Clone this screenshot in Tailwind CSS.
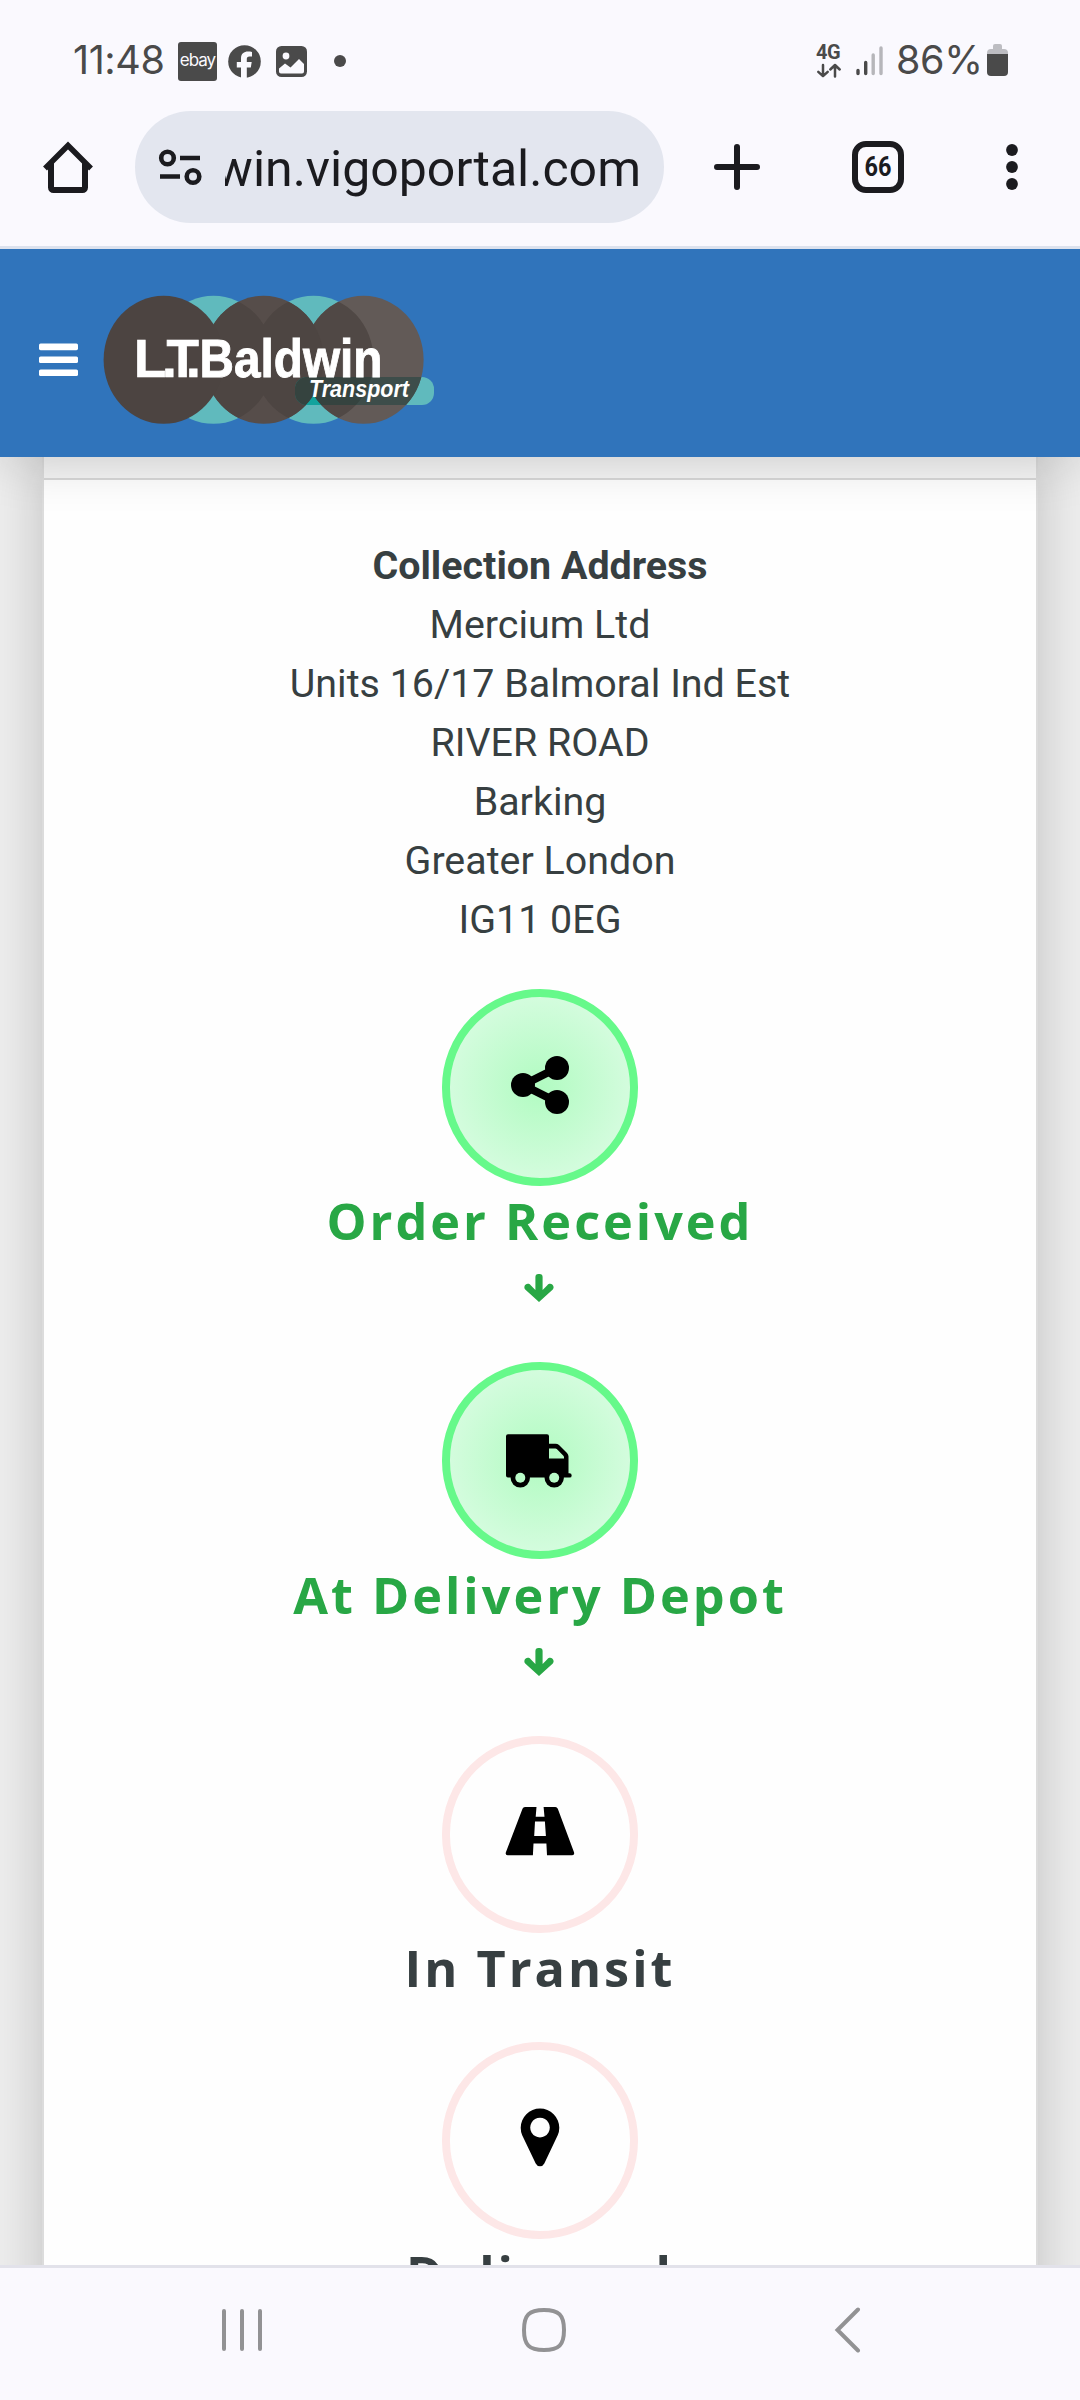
<!DOCTYPE html>
<html lang="en">
<head>
<meta charset="utf-8">
<title>Track Delivery</title>
<script src="https://cdn.jsdelivr.net/npm/@tailwindcss/browser@4"></script>
</head>
<body class="w-[1080px] h-[2400px] overflow-hidden flex flex-col bg-[#faf9fe] font-['Roboto',sans-serif]">

<!-- status bar -->
<div class="h-[100px] shrink-0 flex items-start pl-[73px] pr-[72px] pt-[42px] text-[#4a4a4a]">
  <span class="w-[105px] h-[39px] text-[39.5px] leading-[37px] font-normal font-['Inter',sans-serif] whitespace-nowrap tracking-[-0.4px]">11:48</span>
  <span class="w-[39px] h-[39px] rounded-[3px] bg-[#4a4a4a] text-[#faf9fe] text-[17px] leading-[36px] text-center tracking-[-1px] font-['Inter',sans-serif]">ebay</span>
  <svg class="ml-[11px] mt-[3px]" width="33" height="33" viewBox="0 0 33 33"><circle cx="16.500" cy="16.500" r="16.300" fill="#4a4a4a"/><path d="M13 33V22.500H8.800V17H13v-3.500C13 8.500 16 6.500 20 6.500c1.500 0 2.800.1 4 .4v4.600h-2.500c-2 0-2.700 1-2.700 2.600V17h4.900l-.9 5.500h-4V33z" fill="#faf9fe"/></svg>
  <svg class="ml-[15px] mt-[4px]" width="31" height="31" viewBox="0 0 31 31"><rect width="31" height="31" rx="5.500" fill="#4a4a4a"/><circle cx="10" cy="10" r="3.400" fill="#faf9fe"/><path d="M3 22.500l6-5 5.500 4L23 13l5 5v7.500a2 2 0 0 1-2 2H5a2 2 0 0 1-2-2z" fill="#faf9fe"/></svg>
  <span class="ml-[27px] mt-[13px] w-3 h-3 rounded-full bg-[#4a4a4a]"></span>
  <div class="ml-auto flex items-start">
    <div class="w-[26px] mr-[14px] flex flex-col">
      <span class="h-[21px] text-[20px] leading-[21px] font-bold tracking-[-0.5px]">4G</span>
      <svg width="26" height="15" viewBox="0 0 26 15" fill="none" stroke="#4a4a4a" stroke-width="2.500" stroke-linecap="round" stroke-linejoin="round"><path d="M7 2v11M2.300 8.800L7 13.200l4.700-4.400M19 13.500V2.200M14.300 6.500L19 2l4.700 4.500"/></svg>
    </div>
    <svg class="mt-[4px]" width="27" height="30" viewBox="0 0 27 30" stroke-width="3.400" stroke-linecap="round"><path d="M2 24.500v3M9.700 16.500v11" stroke="#4a4a4a"/><path d="M17.200 9v18.500M25 2v25.500" stroke="#b6b6ba"/></svg>
    <span class="ml-[13px] w-[91px] text-[39.5px] leading-[37px] font-normal font-['Inter',sans-serif] tracking-[-0.4px] whitespace-nowrap">86%</span>
    <svg class="mt-[2px]" width="21" height="32" viewBox="0 0 21 32"><path d="M6 2a2 2 0 0 1 2-2h5a2 2 0 0 1 2 2v3h2a4 4 0 0 1 4 4v2H0V9a4 4 0 0 1 4-4h2z" fill="#bdbdc2"/><path d="M0 10h21v18a4 4 0 0 1-4 4H4a4 4 0 0 1-4-4z" fill="#4a4a4a"/></svg>
  </div>
</div>

<!-- browser toolbar -->
<div class="h-[149px] shrink-0 flex items-start pt-[11px] border-b-[3px] border-[#dce2ee]">
  <svg class="ml-[41px] mt-[29px]" width="54" height="54" viewBox="0 0 54 54" fill="none" stroke="#1b1b1f" stroke-width="6" stroke-linejoin="round"><path d="M4 28.500L27 5.500l23 23" stroke-width="5.500" stroke-linejoin="miter"/><path d="M10 23v24.500a2.500 2.500 0 0 0 2.500 2.500h29a2.500 2.500 0 0 0 2.500-2.500V23"/></svg>
  <div class="ml-[40px] w-[529px] h-[112px] rounded-full bg-[#e3e6ef] flex items-center">
    <svg class="ml-[23px]" width="44" height="38" viewBox="0 0 44 38" fill="none" stroke="#1b1b1f" stroke-width="4.600"><circle cx="9.500" cy="10" r="6.300"/><path d="M22 10h20M2 28.500h20"/><circle cx="35" cy="28.500" r="6.300"/></svg>
    <div class="ml-[23px] w-[416px] h-[76px] overflow-hidden flex justify-end">
      <span class="text-[50px] leading-[80px] text-[#1b1b1f] whitespace-nowrap">baldwin.vigoportal.com</span>
    </div>
  </div>
  <svg class="ml-[50px] mt-[33px]" width="46" height="46" viewBox="0 0 46 46" stroke="#1b1b1f" stroke-width="6" stroke-linecap="round"><path d="M23 3v40M3 23h40"/></svg>
  <div class="ml-[92px] mt-[30px] w-[52px] h-[52px] rounded-[14px] border-[6px] border-[#1b1b1f] flex items-center justify-center">
    <span class="text-[28px] leading-[40px] font-bold text-[#1b1b1f] scale-x-[0.84]">66</span>
  </div>
  <svg class="ml-[102px] mt-[33px]" width="12" height="46" viewBox="0 0 12 46" fill="#1b1b1f"><circle cx="6" cy="6" r="5.900"/><circle cx="6" cy="23" r="5.900"/><circle cx="6" cy="40" r="5.900"/></svg>
</div>

<!-- page -->
<div class="h-[2016px] shrink-0 overflow-hidden bg-[#eeeeee] flex flex-col">
  <header class="relative z-10 h-[208px] shrink-0 bg-[#3074bb] flex items-start shadow-[0_0_52px_rgba(0,0,0,0.2)]">
    <svg class="ml-[39px] mt-[94px]" width="39" height="34" viewBox="0 0 39 34" fill="#fff"><rect y=".6" width="39" height="6.600" rx="1.600"/><rect y="13.500" width="39" height="6.600" rx="1.600"/><rect y="26.400" width="39" height="6.600" rx="1.600"/></svg>
    <svg class="ml-[22px] mt-[41px]" width="340" height="140" viewBox="100 290 340 140">
      <defs>
        <clipPath id="teals"><ellipse cx="213.500" cy="359.800" rx="60" ry="64"/><ellipse cx="313.500" cy="359.800" rx="60" ry="64"/></clipPath>
        <clipPath id="greys"><ellipse cx="263.500" cy="359.800" rx="60" ry="64"/><ellipse cx="363.600" cy="359.800" rx="60" ry="64"/></clipPath>
      </defs>
      <g fill="#60babd"><ellipse cx="213.500" cy="359.800" rx="60" ry="64"/><ellipse cx="313.500" cy="359.800" rx="60" ry="64"/><rect x="295" y="377" width="139" height="28" rx="12"/></g>
      <ellipse cx="363.600" cy="359.800" rx="60" ry="64" fill="#625a57"/>
      <ellipse cx="263.500" cy="359.800" rx="60" ry="64" fill="#564d4a"/>
      <g clip-path="url(#teals)"><ellipse cx="363.600" cy="359.800" rx="60" ry="64" fill="#504845"/><ellipse cx="263.500" cy="359.800" rx="60" ry="64" fill="#4d4542"/></g>
      <ellipse cx="163.600" cy="359.800" rx="60" ry="64" fill="#4c4441"/>
      <g clip-path="url(#teals)"><rect x="295" y="377" width="139" height="28" rx="12" fill="#12a39d"/></g>
      <g clip-path="url(#greys)"><rect x="295" y="377" width="139" height="28" rx="12" fill="#3d4d4a"/></g>
      <g clip-path="url(#greys)"><g clip-path="url(#teals)"><rect x="295" y="377" width="139" height="28" rx="12" fill="#35433f"/></g></g>
      <g font-family="Liberation Sans, sans-serif" font-weight="700" fill="#fff">
        <text x="134 162 166.500 186" y="377.300" font-size="53" stroke="#fff" stroke-width=".7">L.T.</text>
        <text x="199.500" y="377.300" font-size="53" textLength="183" lengthAdjust="spacingAndGlyphs" stroke="#fff" stroke-width=".9">Baldwin</text>
        <text x="309" y="397" font-style="italic" font-size="23.500" textLength="100" lengthAdjust="spacingAndGlyphs">Transport</text>
      </g>
    </svg>
  </header>

  <main class="mx-[42px] h-[1900px] shrink-0 border-x-2 border-[#dcdcdc] bg-[#fefefe] shadow-[0_0_52px_rgba(0,0,0,0.2)] flex flex-col items-center text-[#373f41]">
    <div class="w-full h-[23px] shrink-0 bg-[#f5f5f5] border-b-2 border-[#d8d8d8]"></div>
    <address class="mt-[56px] not-italic text-center text-[39.4px] leading-[59px]">
      <b class="block font-bold">Collection Address</b>
      <span class="block">Mercium Ltd</span>
      <span class="block">Units 16/17 Balmoral Ind Est</span>
      <span class="block">RIVER ROAD</span>
      <span class="block">Barking</span>
      <span class="block">Greater London</span>
      <span class="block">IG11 0EG</span>
    </address>

    <section class="mt-[40px] h-[373px] shrink-0 flex flex-col items-center text-[#28a745]">
      <div class="w-[196px] h-[197px] shrink-0 rounded-full border-8 border-[#66f98a] bg-[radial-gradient(circle,#b1fbc1_0%,#d3fcdd_70%)] flex items-center justify-center">
        <svg class="-mt-[5px]" width="60" height="60" viewBox="510 1055 60 60"><path d="M557 1068l-34 17 34 17" fill="none" stroke="#000" stroke-width="8"/><circle cx="523" cy="1085" r="12"/><circle cx="557" cy="1068" r="12"/><circle cx="557" cy="1102" r="12"/></svg>
      </div>
      <h3 class="h-[68px] leading-[70px] text-[50.4px] font-bold tracking-[3px] whitespace-nowrap font-['Open_Sans',sans-serif]">Order Received</h3>
      <svg class="mt-[20px] mr-[2px]" width="30" height="28" viewBox="0 0 30 28"><path d="M11.400 3a3 3 0 0 1 3-3h1.200a3 3 0 0 1 3 3v13l4.700-4.800c3-3.600 8.400.6 5.500 4.400L15 28 1.200 15.600c-3-3.800 2.500-8 5.500-4.400l4.700 4.800z" fill="#28a745"/></svg>
    </section>

    <section class="h-[374px] shrink-0 flex flex-col items-center text-[#28a745]">
      <div class="w-[196px] h-[197px] shrink-0 rounded-full border-8 border-[#66f98a] bg-[radial-gradient(circle,#b1fbc1_0%,#d3fcdd_70%)] flex items-center justify-center">
        <svg width="80" height="60" viewBox="500 1430.500 80 60"><path fill-rule="evenodd" d="M508 1433.700h39a2 2 0 0 1 2 2v7.600h6.500q2 0 3.500 1.300l8 8q1.500 1.500 1.500 3.500v16.600h1a2.200 2.200 0 0 1 0 4.400H508a2 2 0 0 1-2-2v-39.400a2 2 0 0 1 2-2zM549 1448v10h15v-1.300q0-.8-.6-1.400l-6.600-6.700q-.6-.6-1.400-.6z"/><circle cx="520.300" cy="1477.300" r="9.700"/><circle cx="554.200" cy="1477.300" r="9.700"/><circle cx="520.300" cy="1477.300" r="5" fill="#b9fbc8"/><circle cx="554.200" cy="1477.300" r="5" fill="#b9fbc8"/></svg>
      </div>
      <h3 class="h-[68px] leading-[72px] text-[50.4px] font-bold tracking-[3px] whitespace-nowrap font-['Open_Sans',sans-serif]">At Delivery Depot</h3>
      <svg class="mt-[21px] mr-[2px]" width="30" height="28" viewBox="0 0 30 28"><path d="M11.400 3a3 3 0 0 1 3-3h1.200a3 3 0 0 1 3 3v13l4.700-4.800c3-3.600 8.400.6 5.500 4.400L15 28 1.200 15.600c-3-3.800 2.500-8 5.500-4.400l4.700 4.800z" fill="#28a745"/></svg>
    </section>

    <section class="h-[306px] shrink-0 flex flex-col items-center">
      <div class="w-[196px] h-[197px] shrink-0 rounded-full border-8 border-[#fde7e7] flex items-center justify-center">
        <svg width="80" height="60" viewBox="500 1804.500 80 60"><path fill-rule="evenodd" d="M525 1806.500h11.500l-.8 9.800h8.800l-.9-9.800h11.700q1.800 0 2.500 1.700l16.200 43.500q.8 3-1.800 3H547l-.6-11.600h-12.900l-.6 11.600h-25.300q-2.600 0-1.700-3l16.600-43.500q.7-1.700 2.500-1.700zM535 1821l-.8 14.600h11.700l-1-14.600z"/></svg>
      </div>
      <h3 class="h-[68px] leading-[70px] text-[50.4px] font-bold tracking-[3px] whitespace-nowrap font-['Open_Sans',sans-serif]">In Transit</h3>
    </section>

    <section class="shrink-0 flex flex-col items-center">
      <div class="w-[196px] h-[197px] shrink-0 rounded-full border-8 border-[#fde7e7] flex items-center justify-center">
        <svg width="60" height="70" viewBox="510 2105.500 60 70"><path fill-rule="evenodd" d="M540 2108a19.300 19.300 0 0 1 19.300 19.300q0 4-1.600 7.500l-13.400 28.300q-1.300 2.700-4.300 2.700t-4.300-2.700l-13.500-28.300q-1.500-3.500-1.500-7.500A19.300 19.300 0 0 1 540 2108zm0 9.300a9.800 9.800 0 1 0 .01 0z"/></svg>
      </div>
      <h3 class="h-[68px] leading-[70px] text-[50.4px] font-bold tracking-[3px] whitespace-nowrap font-['Open_Sans',sans-serif]">Delivered</h3>
    </section>
  </main>
</div>

<!-- navigation bar -->
<div class="relative z-20 h-[135px] shrink-0 border-t-[3px] border-[#e2e2ea] bg-[#faf9fe] flex items-start pt-[38px]">
  <svg class="ml-[220px] mt-[2px]" width="44" height="44" viewBox="0 0 44 44" stroke="#929294" stroke-width="4" stroke-linecap="round"><path d="M4 3v38M22 3v38M40 3v38"/></svg>
  <svg class="ml-[258px] mt-[2px]" width="44" height="44" viewBox="0 0 44 44" fill="none" stroke="#929294" stroke-width="4"><path d="M22 2c15 0 20 5 20 20s-5 20-20 20S2 37 2 22 7 2 22 2z"/></svg>
  <svg class="ml-[267px] mt-[1px]" width="30" height="46" viewBox="0 0 30 46" fill="none" stroke="#929294" stroke-width="4" stroke-linecap="round"><path d="M25 2.500L4.500 23 25 43.500"/></svg>
</div>
</body>
</html>
